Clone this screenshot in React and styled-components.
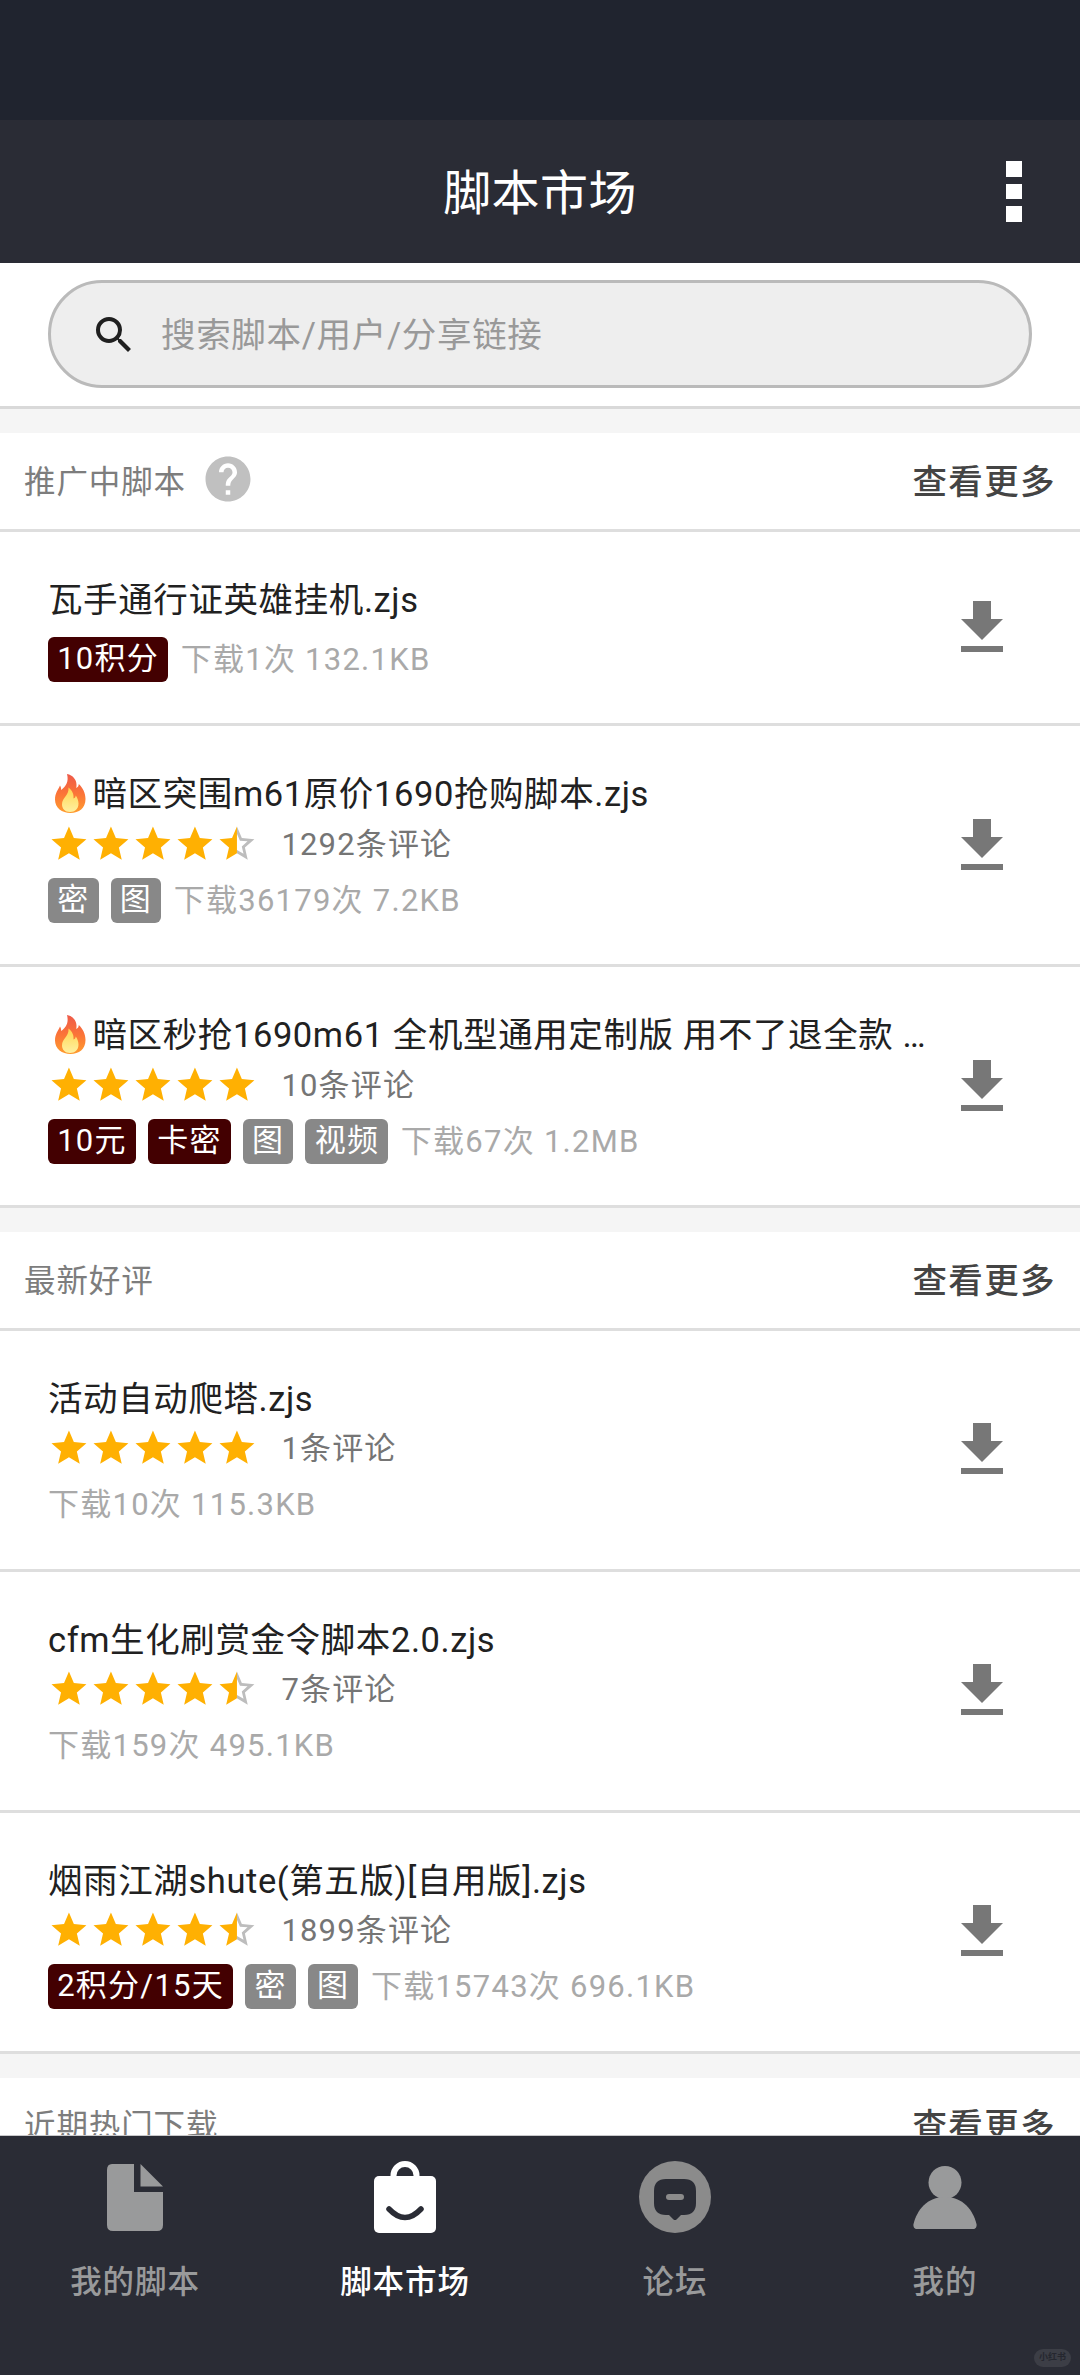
import React from "react";
import styled, { createGlobalStyle, css } from "styled-components";

const GlobalStyle = createGlobalStyle`
  * {
    box-sizing: border-box;
  }

  body {
    margin: 0;
    background: #fff;
    font-family: Roboto, "Noto Sans CJK SC", sans-serif;
    -webkit-font-smoothing: antialiased;
  }
`;

const Screen = styled.div`
  display: flex;
  flex-direction: column;
  width: 1080px;
  height: 2375px;
  overflow: hidden;
  background: #fff;
`;

const StatusBar = styled.div`
  flex: none;
  height: 120px;
  background: #20242f;
`;

const Header = styled.header`
  flex: none;
  display: grid;
  grid-template-columns: 1fr auto 1fr;
  align-items: center;
  height: 143px;
  padding: 0 58px;
  background: #2a2c35;
`;

const HeaderTitle = styled.h1`
  grid-column: 2;
  margin: 0;
  padding-top: 4px;
  color: #fff;
  font-size: 48px;
  font-weight: 400;
  letter-spacing: 0.4px;
  line-height: 70px;
`;

const MoreButton = styled.div`
  display: flex;
  flex-direction: column;
  justify-self: end;
  gap: 7px;
`;

const MoreDot = styled.span`
  width: 16px;
  height: 15.5px;
  background: #fff;
`;

const SearchArea = styled.div`
  flex: none;
  height: 146px;
  padding: 17px 48px 0;
  border-bottom: 3px solid #d9d9d9;
`;

const SearchBox = styled.div`
  display: flex;
  align-items: center;
  height: 108px;
  padding: 1px 0 0 39px;
  border: 3px solid #bababa;
  border-radius: 54px;
  background: #eeeeee;
`;

const SearchHint = styled.span`
  margin-left: 23px;
  padding-bottom: 5px;
  color: #999;
  font-size: 34.5px;
  letter-spacing: 0.67px;
`;

const Feed = styled.main`
  flex: 1;
  min-height: 0;
  overflow: hidden;
`;

const Section = styled.section`
  padding-top: 24px;
  background: #f5f5f5;
`;

const SectionHead = styled.div`
  display: flex;
  align-items: center;
  height: 98.5px;
  padding: 0 24px 4px;
  border-bottom: 3px solid #dedede;
  background: #fff;
`;

const SectionTitle = styled.h2`
  margin: 0 15px 0 0;
  color: #7d7d7d;
  font-size: 31.5px;
  font-weight: 400;
  letter-spacing: 0.9px;
`;

const SeeMore = styled.span`
  margin-left: auto;
  color: #444;
  font-size: 34.5px;
  font-weight: 500;
  letter-spacing: 1.4px;
`;

const Row = styled.article`
  display: flex;
  align-items: center;
  justify-content: space-between;
  padding: 43px 62px 41.5px 48px;
  border-bottom: 3px solid #dedede;
  background: #fff;
`;

const Info = styled.div`
  display: flex;
  flex-direction: column;
  gap: ${({ $rated }) => ($rated ? "0" : "14px")};
  width: 890px;
`;

const Name = styled.h3`
  height: 48px;
  margin: 0;
  overflow: hidden;
  color: #212121;
  font-size: 34.5px;
  font-weight: 400;
  letter-spacing: 0.6px;
  line-height: 50px;
  text-overflow: ellipsis;
  white-space: nowrap;
`;

const Rating = styled.div`
  display: flex;
  align-items: center;
  height: 60.5px;
  padding-bottom: 7.5px;
`;

const Comments = styled.span`
  margin-left: 24px;
  padding-bottom: 5px;
  color: #757575;
  font-size: 31px;
  letter-spacing: 1.15px;
`;

const Meta = styled.div`
  display: flex;
  align-items: center;
  gap: 12px;
  height: 45px;
`;

const Tag = styled.span`
  height: 45px;
  padding: 0 9.2px;
  border-radius: 6px;
  background: #888;
  color: #fff;
  font-size: 31px;
  letter-spacing: 1.25px;
  line-height: 43px;
  white-space: nowrap;

  ${({ $paid }) =>
    $paid &&
    css`
      background: #430001;
    `}
`;

const Stats = styled.span`
  color: #a9a9a9;
  font-size: 31px;
  letter-spacing: 1.25px;
  line-height: 43px;

  ${Tag} + & {
    margin-left: 0.5px;
  }
`;

const TabBar = styled.nav`
  flex: none;
  display: grid;
  grid-template-columns: repeat(4, 1fr);
  height: 240px;
  padding-top: 25px;
  border-top: 1px solid #c8c8ca;
  background: #2a2c35;
`;

const Tab = styled.div`
  display: flex;
  flex-direction: column;
  align-items: center;
  gap: 26.5px;
  color: ${({ $active }) => ($active ? "#fff" : "#999a9b")};
  font-size: 31.5px;
  font-weight: 500;
  letter-spacing: 0.9px;
  line-height: 46px;
`;

const Watermark = styled.span`
  position: absolute;
  top: 2349px;
  left: 1034px;
  width: 37px;
  height: 18px;
  border-radius: 9px;
  background: #3c3e46;
  color: #25272f;
  font-size: 9px;
  font-weight: 700;
  line-height: 17px;
  text-align: center;
`;

const Flame = styled.svg`
  width: 31px;
  height: 39px;
  margin: 0 7px 0 6.5px;
  vertical-align: -7px;
`;

function Icon({ size, color = "currentColor", path, children }) {
  return (
    <svg width={size} height={size} viewBox="0 0 24 24" fill={color}>
      {path ? <path d={path} /> : children}
    </svg>
  );
}

const SEARCH =
  "M15.5 14h-.79l-.28-.27A6.471 6.471 0 0 0 16 9.5 6.5 6.5 0 1 0 9.5 16c1.61 0 3.09-.59 4.23-1.57l.27.28v.79l5 4.99L20.49 19l-4.99-5zm-6 0C7.01 14 5 11.99 5 9.5S7.01 5 9.5 5 14 7.01 14 9.5 11.99 14 9.5 14z";
const HELP =
  "M12 2C6.48 2 2 6.48 2 12s4.48 10 10 10 10-4.48 10-10S17.52 2 12 2zm1 17h-2v-2h2v2zm2.07-7.75l-.9.92C13.45 12.9 13 13.5 13 15h-2v-.5c0-1.1.45-2.1 1.17-2.83l1.24-1.26c.37-.36.59-.86.59-1.41 0-1.1-.9-2-2-2s-2 .9-2 2H8c0-2.21 1.79-4 4-4s4 1.79 4 4c0 .88-.36 1.68-.93 2.25z";
const DOWNLOAD = "M19 9h-4V3H9v6H5l7 7 7-7zM5 18v2h14v-2H5z";
const STAR =
  "M12 17.27L18.18 21l-1.64-7.03L22 9.24l-7.19-.61L12 2 9.19 8.63 2 9.24l5.46 4.73L5.82 21z";
const STAR_OUTLINE_RIGHT =
  "M22 9.24l-7.19-.62L12 2v4.1l1.71 4.04 4.38.38-3.32 2.88 1 4.28L12 15.4v1.87L18.18 21l-1.63-7.03z";
const STAR_LEFT = "M12 2L9.19 8.63 2 9.24l5.46 4.73L5.82 21 12 17.27z";

function FireIcon() {
  return (
    <Flame viewBox="0 0 31 39">
      <defs>
        <linearGradient id="flameOuter" x1="0" y1="0" x2="0" y2="1">
          <stop offset="0" stopColor="#ee5a4a" />
          <stop offset="0.5" stopColor="#fb7438" />
          <stop offset="1" stopColor="#ff9c2e" />
        </linearGradient>
        <linearGradient id="flameInner" x1="0" y1="0" x2="0" y2="1">
          <stop offset="0" stopColor="#ffd54f" />
          <stop offset="1" stopColor="#fff0a0" />
        </linearGradient>
      </defs>
      <path
        fill="url(#flameOuter)"
        d="M12 0c6 1 9.5 6 9.5 10.5 0 1.5 0 2.5-.3 3.5 1.8-.8 2.5-2 2.6-4C28 14 30.5 19 30.5 25c0 9-6.5 14-15 14S0 34 0 25.5C0 19 3 16 5 11.5c.8 1.5 1.2 2.5 1.2 4.5C11 12 14 8 12 0z"
      />
      <path
        fill="url(#flameInner)"
        d="M13.5 13.5c4 3 5.5 7 5 11 1.5-.5 2-1.5 2.300-3 1.5 2 2.7 5 2.7 8 0 5.5-3.5 8.5-8.5 8.5S7 34.5 7 30.5c0-7 7-8.500 6.5-17z"
      />
    </Flame>
  );
}

function Stars({ value }) {
  return [1, 2, 3, 4, 5].map((n) =>
    value >= n ? (
      <Icon key={n} size={41.9} color="#ffb002" path={STAR} />
    ) : (
      <Icon key={n} size={41.9}>
        <path fill="#bdbdbd" d={STAR_OUTLINE_RIGHT} />
        <path fill="#ffb002" d={STAR_LEFT} />
      </Icon>
    )
  );
}

const sections = [
  {
    title: "推广中脚本",
    help: true,
    items: [
      {
        name: "瓦手通行证英雄挂机.zjs",
        tags: [{ text: "10积分", paid: true }],
        stats: "下载1次 132.1KB",
      },
      {
        hot: true,
        name: "暗区突围m61原价1690抢购脚本.zjs",
        rating: 4.5,
        comments: 1292,
        tags: [{ text: "密" }, { text: "图" }],
        stats: "下载36179次 7.2KB",
      },
      {
        hot: true,
        name: "暗区秒抢1690m61 全机型通用定制版 用不了退全款 …",
        rating: 5,
        comments: 10,
        tags: [
          { text: "10元", paid: true },
          { text: "卡密", paid: true },
          { text: "图" },
          { text: "视频" },
        ],
        stats: "下载67次 1.2MB",
      },
    ],
  },
  {
    title: "最新好评",
    items: [
      {
        name: "活动自动爬塔.zjs",
        rating: 5,
        comments: 1,
        tags: [],
        stats: "下载10次 115.3KB",
      },
      {
        name: "cfm生化刷赏金令脚本2.0.zjs",
        rating: 4.5,
        comments: 7,
        tags: [],
        stats: "下载159次 495.1KB",
      },
      {
        name: "烟雨江湖shute(第五版)[自用版].zjs",
        rating: 4.5,
        comments: 1899,
        tags: [{ text: "2积分/15天", paid: true }, { text: "密" }, { text: "图" }],
        stats: "下载15743次 696.1KB",
      },
    ],
  },
  { title: "近期热门下载", items: [] },
];

function ScriptRow({ item }) {
  return (
    <Row>
      <Info $rated={Boolean(item.rating)}>
        <Name>
          {item.hot && <FireIcon />}
          {item.name}
        </Name>
        {item.rating && (
          <Rating>
            <Stars value={item.rating} />
            <Comments>{item.comments}条评论</Comments>
          </Rating>
        )}
        <Meta>
          {item.tags.map((tag) => (
            <Tag key={tag.text} $paid={tag.paid}>
              {tag.text}
            </Tag>
          ))}
          <Stats>{item.stats}</Stats>
        </Meta>
      </Info>
      <Icon size={72} color="#777" path={DOWNLOAD} />
    </Row>
  );
}

function FileIcon() {
  return (
    <svg width="72" height="72" viewBox="0 0 72 72" fill="currentColor">
      <path d="M13 3h22v28h29v33q0 6-6 6H14q-6 0-6-6V9q0-6 5-6z" />
      <path d="M41.5 3v22.5H64z" />
    </svg>
  );
}

function BagIcon() {
  return (
    <svg width="72" height="72" viewBox="0 0 72 72" fill="none">
      <rect x="5" y="15" width="62" height="57" rx="5" fill="currentColor" />
      <path d="M24.5 17v-2.500a11.5 11.5 0 0 1 23 0V17" stroke="currentColor" strokeWidth="6" />
      <path d="M20 48q16 17 32 0" stroke="#2a2c35" strokeWidth="5.5" strokeLinecap="round" />
    </svg>
  );
}

function ForumIcon() {
  return (
    <svg width="72" height="72" viewBox="0 0 72 72">
      <circle cx="36" cy="36" r="36" fill="#8b8b8b" />
      <path
        fill="#2a2c35"
        d="M27 18h18q12 0 12 12v12q0 12-12 12h-3l-4.5 4.5q-1.5 1.2-3 0L30 54h-3q-12 0-12-12V30q0-12 12-12z"
      />
      <rect x="27" y="33" width="18" height="6" rx="3" fill="#8b8b8b" />
    </svg>
  );
}

function PersonIcon() {
  return (
    <svg width="72" height="72" viewBox="0 0 72 72" fill="currentColor">
      <circle cx="36" cy="21.5" r="16.5" />
      <path d="M36 36c18 0 28 13 31.5 27 .5 3-1 5-3.5 5H8c-2.5 0-4-2-3.5-5C8 49 18 36 36 36z" />
    </svg>
  );
}

export default function App() {
  return (
    <Screen>
      <GlobalStyle />
      <StatusBar />
      <Header>
        <HeaderTitle>脚本市场</HeaderTitle>
        <MoreButton>
          <MoreDot />
          <MoreDot />
          <MoreDot />
        </MoreButton>
      </Header>
      <SearchArea>
        <SearchBox>
          <Icon size={48} color="#1f1f1f" path={SEARCH} />
          <SearchHint>搜索脚本/用户/分享链接</SearchHint>
        </SearchBox>
      </SearchArea>
      <Feed>
        {sections.map((section) => (
          <Section key={section.title}>
            <SectionHead>
              <SectionTitle>{section.title}</SectionTitle>
              {section.help && <Icon size={54} color="#c0c0c0" path={HELP} />}
              <SeeMore>查看更多</SeeMore>
            </SectionHead>
            {section.items.map((item) => (
              <ScriptRow key={item.name} item={item} />
            ))}
          </Section>
        ))}
      </Feed>
      <TabBar>
        <Tab>
          <FileIcon />
          我的脚本
        </Tab>
        <Tab $active>
          <BagIcon />
          脚本市场
        </Tab>
        <Tab>
          <ForumIcon />
          论坛
        </Tab>
        <Tab>
          <PersonIcon />
          我的
        </Tab>
      </TabBar>
      <Watermark>小红书</Watermark>
    </Screen>
  );
}
